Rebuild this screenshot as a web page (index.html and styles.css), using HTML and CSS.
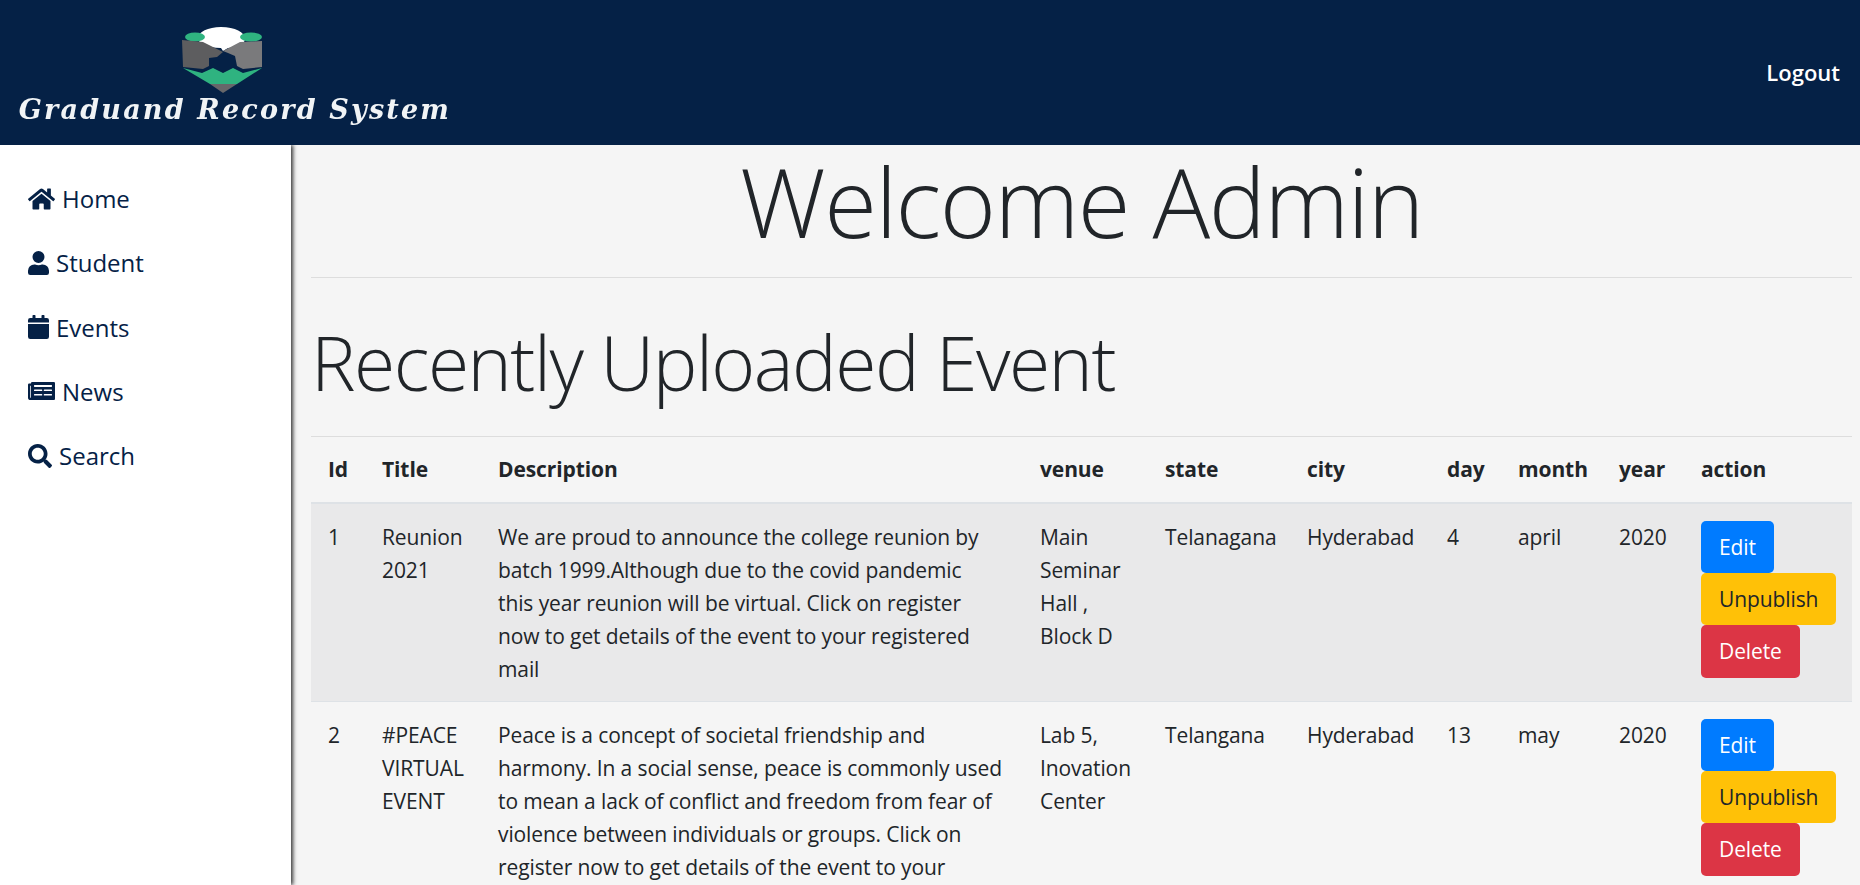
FILE: index.html
```html
<!DOCTYPE html>
<html lang="en">
<head>
    <meta charset="UTF-8">
    <meta name="viewport" content="width=device-width, initial-scale=1.0">
    <title>Graduand Record System</title>
    <link rel="stylesheet" href="styles.css">
</head>
<body>
    <header class="topbar">
        <div class="logo">
            <svg class="logo-mark" viewBox="0 0 82 66" width="82" height="66">
                <path d="M40 0 C54 0 64 5 64 12 C64 18 54 21 47 21 L42 24 L40 21 C26 21 17 17 17 11 C17 5 27 0 40 0 Z" fill="#ffffff"/>
                <ellipse cx="14" cy="10" rx="10" ry="4.500" fill="#2fb380"/>
                <ellipse cx="70" cy="10" rx="11" ry="4.500" fill="#2fb380"/>
                <path d="M1 13 L22 15 L42 25 L36 30 L28 31 L28 39 L22 42 L2 40 Z" fill="#5d5d5f"/>
                <path d="M81 14 L59 15 L42 24 L47 26 L54 29 L56 39 L62 42 L81 40 Z" fill="#7a7a7c"/>
                <path d="M2 41 L21 46 L32 41 L42 46 L52 41 L62 46 L81 41 L56 57 L29 57 Z" fill="#2fb380"/>
                <path d="M29 57 L56 57 L42 66 Z" fill="#67676a"/>
            </svg>
            <span class="logo-text">Graduand Record System</span>
        </div>
        <a class="logout" href="#">Logout</a>
    </header>
    <div class="layout">
        <nav class="sidebar">
            <a class="nav-link" href="#">
                <svg class="nav-icon" viewBox="0 0 576 512" width="27" height="24"><path d="M280.4 148.300 L96 300.100 V464 a16 16 0 0 0 16 16 l112-.3 a16 16 0 0 0 15.900-16 V368 a16 16 0 0 1 16-16 h64 a16 16 0 0 1 16 16 v95.600 a16 16 0 0 0 16 16 l112 .3 a16 16 0 0 0 16-16 V300 L295.700 148.300 a12.200 12.200 0 0 0-15.300 0 Z M571.600 251.500 L488 182.600 V44 a12 12 0 0 0-12-12 h-56 a12 12 0 0 0-12 12 v72.600 L318.500 43 a48 48 0 0 0-61 0 L4.300 251.500 a12 12 0 0 0-1.600 16.900 l25.500 31 a12 12 0 0 0 16.900 1.600 L280.400 107 a12.200 12.200 0 0 1 15.300 0 L530.900 301 a12 12 0 0 0 16.900-1.600 l25.500-31 a12 12 0 0 0-1.700-16.900 Z"/></svg>
                Home
            </a>
            <a class="nav-link" href="#">
                <svg class="nav-icon" viewBox="0 0 448 512" width="21" height="24"><path d="M224 256 a128 128 0 1 0 0-256 a128 128 0 0 0 0 256 Z M313.600 288 h-16.700 a174.100 174.100 0 0 1-145.800 0 h-16.700 A134.400 134.400 0 0 0 0 422.400 V464 a48 48 0 0 0 48 48 h352 a48 48 0 0 0 48-48 v-41.600 A134.400 134.400 0 0 0 313.600 288 Z"/></svg>
                Student
            </a>
            <a class="nav-link" href="#">
                <svg class="nav-icon" viewBox="0 0 448 512" width="21" height="24"><path d="M0 464 a48 48 0 0 0 48 48 h352 a48 48 0 0 0 48-48 V192 H0 Z M400 64 h-48 V16 a16 16 0 0 0-16-16 h-32 a16 16 0 0 0-16 16 v48 H160 V16 a16 16 0 0 0-16-16 h-32 a16 16 0 0 0-16 16 v48 H48 A48 48 0 0 0 0 112 v48 h448 v-48 a48 48 0 0 0-48-48 Z"/></svg>
                Events
            </a>
            <a class="nav-link" href="#">
                <svg class="nav-icon" viewBox="0 0 576 512" width="27" height="24"><path fill-rule="evenodd" d="M552 64 H88 a24 24 0 0 0-24 24 v8 H24 A24 24 0 0 0 0 120 v272 a56 56 0 0 0 56 56 h496 a24 24 0 0 0 24-24 V88 a24 24 0 0 0-24-24 Z M56 400 a8 8 0 0 1-8-8 V144 h16 v248 a8 8 0 0 1-8 8 Z M292 352 H140 a12 12 0 0 1-12-12 v-8 a12 12 0 0 1 12-12 h152 a12 12 0 0 1 12 12 v8 a12 12 0 0 1-12 12 Z M500 352 H348 a12 12 0 0 1-12-12 v-8 a12 12 0 0 1 12-12 h152 a12 12 0 0 1 12 12 v8 a12 12 0 0 1-12 12 Z M292 256 H140 a12 12 0 0 1-12-12 v-8 a12 12 0 0 1 12-12 h152 a12 12 0 0 1 12 12 v8 a12 12 0 0 1-12 12 Z M500 256 H348 a12 12 0 0 1-12-12 v-8 a12 12 0 0 1 12-12 h152 a12 12 0 0 1 12 12 v8 a12 12 0 0 1-12 12 Z M500 168 H140 a12 12 0 0 1-12-12 v-16 a12 12 0 0 1 12-12 h360 a12 12 0 0 1 12 12 v16 a12 12 0 0 1-12 12 Z"/></svg>
                News
            </a>
            <a class="nav-link" href="#">
                <svg class="nav-icon" viewBox="0 0 512 512" width="24" height="24"><path d="M505 442.700 L405.300 343 c-4.500-4.500-10.600-7-17-7 H372 c27.600-35.300 44-79.700 44-128 C416 93.100 322.900 0 208 0 S0 93.100 0 208 s93.100 208 208 208 c48.300 0 92.700-16.400 128-44 v16.300 c0 6.400 2.500 12.500 7 17 l99.700 99.700 c9.400 9.400 24.600 9.400 33.900 0 l28.300-28.300 c9.400-9.400 9.400-24.600 .1-34 Z M208 336 c-70.700 0-128-57.200-128-128 c0-70.700 57.200-128 128-128 c70.700 0 128 57.200 128 128 c0 70.700-57.200 128-128 128 Z"/></svg>
                Search
            </a>
        </nav>
        <main class="content">
            <h1 class="welcome">Welcome Admin</h1>
            <hr class="rule">
            <h2 class="section-title">Recently Uploaded Event</h2>
            <hr class="rule">
            <table class="events">
                <thead>
                    <tr>
                        <th class="col-id">Id</th>
                        <th class="col-title">Title</th>
                        <th class="col-desc">Description</th>
                        <th class="col-venue">venue</th>
                        <th class="col-state">state</th>
                        <th class="col-city">city</th>
                        <th class="col-day">day</th>
                        <th class="col-month">month</th>
                        <th class="col-year">year</th>
                        <th class="col-action">action</th>
                    </tr>
                </thead>
                <tbody>
                    <tr class="striped">
                        <td>1</td>
                        <td>Reunion 2021</td>
                        <td class="cell-desc">We are proud to announce the college reunion by<br>batch 1999.Although due to the covid pandemic<br>this year reunion will be virtual. Click on register<br>now to get details of the event to your registered<br>mail</td>
                        <td>Main Seminar Hall , Block D</td>
                        <td>Telanagana</td>
                        <td>Hyderabad</td>
                        <td>4</td>
                        <td>april</td>
                        <td>2020</td>
                        <td>
                            <a class="btn btn-edit" href="#">Edit</a>
                            <a class="btn btn-unpublish" href="#">Unpublish</a>
                            <a class="btn btn-delete" href="#">Delete</a>
                        </td>
                    </tr>
                    <tr>
                        <td>2</td>
                        <td>#PEACE VIRTUAL EVENT</td>
                        <td class="cell-desc">Peace is a concept of societal friendship and<br>harmony. In a social sense, peace is commonly used<br>to mean a lack of conflict and freedom from fear of<br>violence between individuals or groups. Click on<br>register now to get details of the event to your<br>registered mail</td>
                        <td>Lab 5, Inovation Center</td>
                        <td>Telangana</td>
                        <td>Hyderabad</td>
                        <td>13</td>
                        <td>may</td>
                        <td>2020</td>
                        <td>
                            <a class="btn btn-edit" href="#">Edit</a>
                            <a class="btn btn-unpublish" href="#">Unpublish</a>
                            <a class="btn btn-delete" href="#">Delete</a>
                        </td>
                    </tr>
                </tbody>
            </table>
        </main>
    </div>
</body>
</html>
```

FILE: styles.css
```css
* {
    box-sizing: border-box;
}

html, body {
    height: 100%;
}

body {
    margin: 0;
    height: 885px;
    overflow: hidden;
    font-family: "Open Sans", "Noto Sans", sans-serif;
    font-size: 21px;
    line-height: 33px;
    color: #212529;
    background-color: #f5f5f5;
}

a {
    text-decoration: none;
}

.topbar {
    display: flex;
    align-items: center;
    justify-content: space-between;
    height: 145px;
    padding: 0 20px 0 18px;
    background-color: #052146;
}

.logo {
    display: flex;
    flex-direction: column;
    align-items: center;
    width: 434px;
    padding-top: 5px;
}

.logo-mark {
    display: block;
    margin-right: 26px;
    filter: blur(0.5px);
}

.logo-text {
    margin-top: 3px;
    font-family: "DejaVu Serif", serif;
    font-style: italic;
    font-weight: bold;
    font-size: 27px;
    line-height: 28px;
    letter-spacing: 2.2px;
    white-space: nowrap;
    color: #f1f4f6;
    filter: blur(0.5px);
}

.logout {
    font-size: 22px;
    font-weight: 600;
    color: #ffffff;
}

.layout {
    display: flex;
    height: 740px;
    overflow: hidden;
}

.sidebar {
    flex: 0 0 291px;
    display: flex;
    flex-direction: column;
    gap: 31.3px;
    padding-top: 37px;
    padding-left: 28px;
    background-color: #ffffff;
    box-shadow: 2px 0 4px #333333;
}

.nav-link {
    display: flex;
    align-items: center;
    gap: 7px;
    font-size: 24px;
    line-height: 33px;
    color: #052146;
}

.nav-icon {
    fill: #052146;
}

.content {
    flex: 1;
    padding: 0 8px 0 20px;
}

.welcome {
    margin: 0 0 21px;
    font-size: 96px;
    font-weight: 300;
    line-height: 111px;
    letter-spacing: -1.5px;
    text-align: center;
}

.rule {
    margin: 0;
    border: 0;
    border-top: 1px solid #dddddd;
}

.section-title {
    margin: 37px 0 27px;
    font-size: 75px;
    font-weight: 300;
    line-height: 94px;
    letter-spacing: -1.5px;
}

.events {
    width: 100%;
    border-collapse: collapse;
    table-layout: fixed;
    letter-spacing: -0.1px;
}

.events th,
.events td {
    padding: 17px 17px 15px;
    text-align: left;
    vertical-align: top;
}

.events th {
    padding-top: 16px;
    padding-bottom: 16px;
    font-weight: 700;
    border-bottom: 2px solid #dee2e6;
}

.events td {
    border-top: 1px solid #dee2e6;
}

.col-id { width: 54px; }
.col-title { width: 116px; }
.col-desc { width: 542px; }
.col-venue { width: 125px; }
.col-state { width: 142px; }
.col-city { width: 140px; }
.col-day { width: 71px; }
.col-month { width: 101px; }
.col-year { width: 82px; }

.cell-desc {
    white-space: nowrap;
}

.striped {
    background-color: #e9e9ea;
}

.btn {
    display: block;
    width: fit-content;
    padding: 9.6px 18px;
    border-radius: 5px;
    white-space: nowrap;
}

.btn-edit {
    color: #ffffff;
    background-color: #007bff;
}

.btn-unpublish {
    color: #212529;
    background-color: #ffc107;
}

.btn-delete {
    color: #ffffff;
    background-color: #dc3545;
}
```
